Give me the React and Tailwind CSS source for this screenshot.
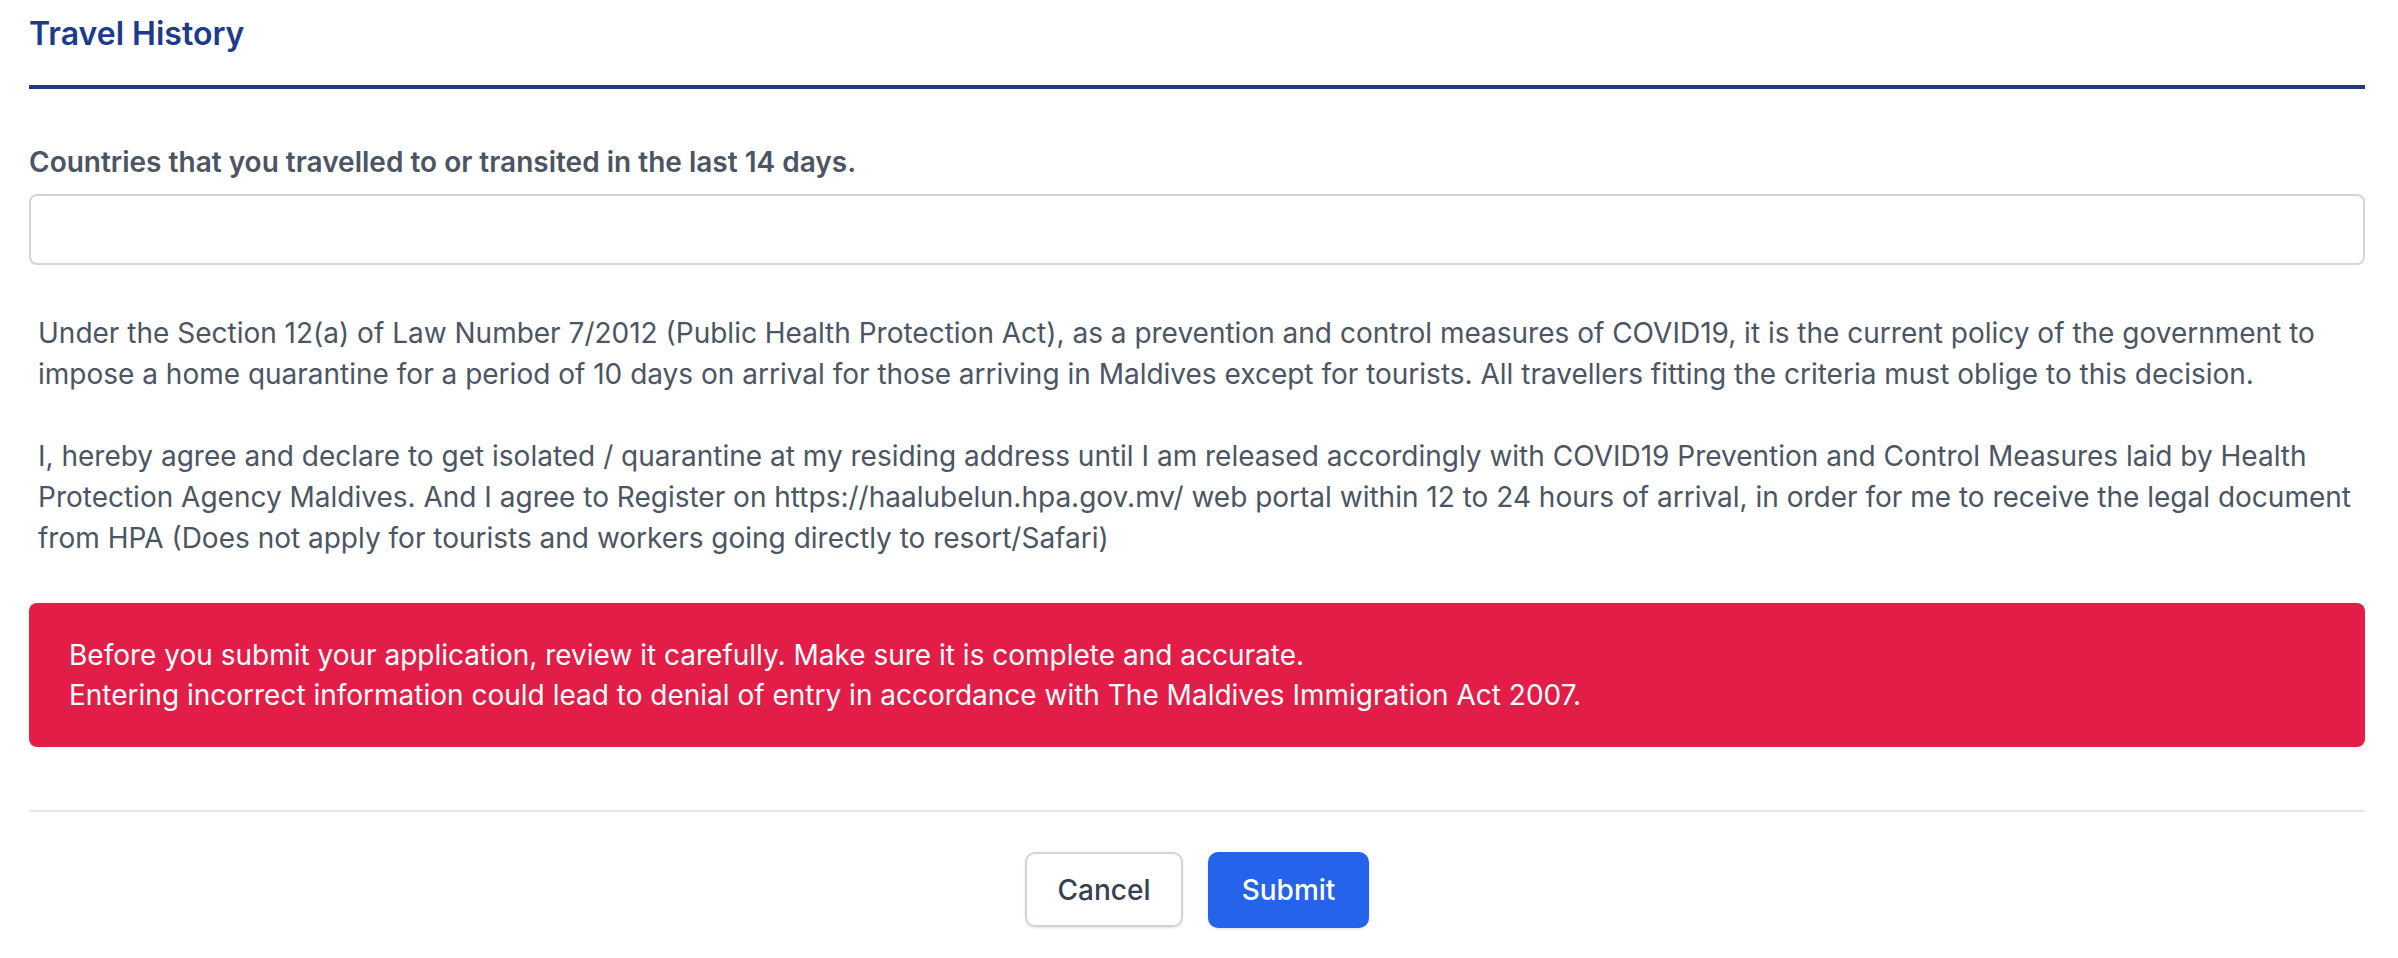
export default function App() {
  return (
    <div className="min-h-screen bg-white pl-[29px] pr-[33px] pt-[14px] font-['Inter','Noto_Sans',sans-serif]">
      <h2 className="text-[32px] leading-[40px] font-semibold text-[#1e3a8a] pb-[31px] border-b-4 border-[#1f3a8a]">
        Travel History
      </h2>

      <div className="pt-[55px]">
        <label className="block text-[28px] leading-[36px] font-semibold text-[#4b5563]">
          Countries that you travelled to or transited in the last 14 days.
        </label>
        <input
          type="text"
          className="mt-[14px] block w-full h-[71px] rounded-[8px] border-2 border-[#d1d5db] bg-white px-4 outline-none"
        />
      </div>

      <div className="pt-[48px] pl-[9px] text-[28px] leading-[41px] text-[#4b5563]">
        <p>
          Under the Section 12(a) of Law Number 7/2012 (Public Health Protection Act), as a prevention and control measures of COVID19, it is the current policy of the government to impose a home quarantine for a period of 10 days on arrival for those arriving in Maldives except for tourists. All travellers fitting the criteria must oblige to this decision.
        </p>
        <p className="mt-[41px]">
          I, hereby agree and declare to get isolated / quarantine at my residing address until I am released accordingly with COVID19 Prevention and Control Measures laid by Health Protection Agency Maldives. And I agree to Register on https://haalubelun.hpa.gov.mv/ web portal within 12 to 24 hours of arrival, in order for me to receive the legal document from HPA (Does not apply for tourists and workers going directly to resort/Safari)
        </p>
      </div>

      <div className="mt-[44px] rounded-[8px] bg-[#e11d48] px-[40px] py-[32px] text-[28px] leading-[40px] text-white">
        <p>Before you submit your application, review it carefully. Make sure it is complete and accurate.</p>
        <p>Entering incorrect information could lead to denial of entry in accordance with The Maldives Immigration Act 2007.</p>
      </div>

      <div className="mt-[63px] border-t-2 border-[#e5e7eb] pt-[40px] flex justify-center gap-[25px]">
        <button
          type="button"
          className="w-[158px] h-[75px] rounded-[10px] border-2 border-[#d1d5db] bg-white text-[28px] font-medium text-[#374151] shadow-sm"
        >
          Cancel
        </button>
        <button
          type="button"
          className="w-[161px] h-[76px] rounded-[10px] bg-[#2563eb] text-[28px] font-medium text-white shadow-sm"
        >
          Submit
        </button>
      </div>
    </div>
  );
}
